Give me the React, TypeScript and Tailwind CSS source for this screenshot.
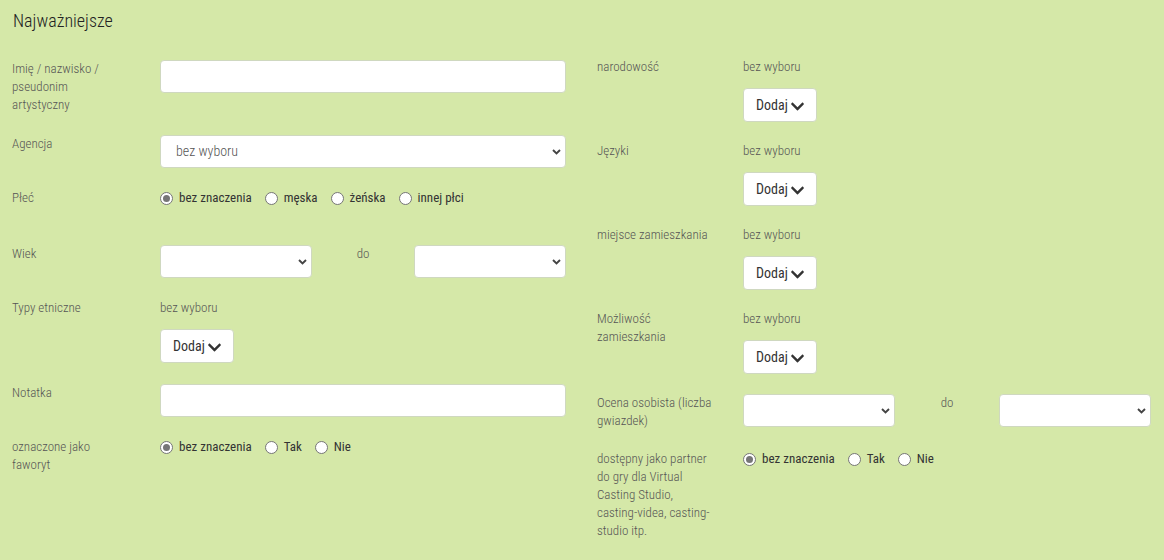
import { FaChevronDown } from "react-icons/fa";

function Label({ lines, w }: { lines: string[]; w: string }) {
  return (
    <div className={`${w} shrink-0 text-[13px] leading-[18px] font-light text-[#555] whitespace-nowrap`}>
      {lines.map((l, i) => (
        <div key={i}>{l}</div>
      ))}
    </div>
  );
}

function TextInput() {
  return <div className="flex-1 h-[33px] bg-white border border-[#cfd8c0] rounded-[4px]" />;
}

function Chevron() {
  return (
    <svg width="9" height="6" viewBox="0 0 9 6" className="shrink-0">
      <path d="M1 1 L4.5 4.5 L8 1" fill="none" stroke="#444" strokeWidth="1.9" />
    </svg>
  );
}

function Select({ text, w }: { text?: string; w: string }) {
  return (
    <div
      className={`${w} h-[33px] bg-white border border-[#cfd8c0] rounded-[4px] flex items-center justify-between pl-[15px] pr-[4px]`}
    >
      <span className="text-[14px] font-light text-[#555]">{text ?? ""}</span>
      <Chevron />
    </div>
  );
}

function Radio({ checked }: { checked?: boolean }) {
  return (
    <span className="w-[13px] h-[13px] rounded-full border border-[#767676] bg-white flex items-center justify-center shrink-0">
      {checked && <span className="w-[7px] h-[7px] rounded-full bg-[#767676]" />}
    </span>
  );
}

function Radios({ options }: { options: string[] }) {
  return (
    <div className="flex items-center gap-[13px] h-[18px] text-[13px] text-[#333]">
      {options.map((o, i) => (
        <label key={o} className="flex items-center gap-[6px]">
          <Radio checked={i === 0} />
          <span>{o}</span>
        </label>
      ))}
    </div>
  );
}

function Dodaj() {
  return (
    <div className="flex flex-col">
      <div className="h-[18px] text-[13px] leading-[18px] font-light text-[#555]">bez wyboru</div>
      <div className="mt-[12px] w-[74px] h-[34px] bg-white border border-[#cfd8c0] rounded-[4px] flex items-center pl-[12px] gap-[2px] text-[14px] text-[#333]">
        <span>Dodaj</span>
        <FaChevronDown className="text-[#333] w-[15px] h-[15px] mt-[2px]" />
      </div>
    </div>
  );
}

function Range() {
  return (
    <div className="flex-1 flex items-start">
      <Select w="w-[152px]" />
      <div className="flex-1 text-center text-[13px] leading-[18px] font-light text-[#555]">do</div>
      <Select w="w-[152px]" />
    </div>
  );
}

export default function App() {
  const L = "w-[148px]";
  const R = "w-[146px]";
  return (
    <div className="w-[1164px] h-[560px] bg-[#d5e8a8] font-['Roboto_Condensed',sans-serif] overflow-hidden">
      <div className="pl-[13px] pt-[7px] h-[58px] text-[18px] font-light text-[#222]">Najważniejsze</div>
      <div className="grid grid-cols-2 gap-[31px] pl-3 pr-[13px]">
        {/* left */}
        <div className="flex flex-col gap-[21px] pt-[2px]">
          <div className="flex items-start">
            <Label w={L} lines={["Imię / nazwisko /", "pseudonim", "artystyczny"]} />
            <TextInput />
          </div>
          <div className="flex items-start">
            <Label w={L} lines={["Agencja"]} />
            <Select w="flex-1" text="bez wyboru" />
          </div>
          <div className="flex items-start h-[35px]">
            <Label w={L} lines={["Płeć"]} />
            <Radios options={["bez znaczenia", "męska", "żeńska", "innej płci"]} />
          </div>
          <div className="flex items-start">
            <Label w={L} lines={["Wiek"]} />
            <Range />
          </div>
          <div className="flex items-start">
            <Label w={L} lines={["Typy etniczne"]} />
            <Dodaj />
          </div>
          <div className="flex items-start">
            <Label w={L} lines={["Notatka"]} />
            <TextInput />
          </div>
          <div className="flex items-start">
            <Label w={L} lines={["oznaczone jako", "faworyt"]} />
            <Radios options={["bez znaczenia", "Tak", "Nie"]} />
          </div>
        </div>
        {/* right */}
        <div className="flex flex-col gap-[20px]">
          <div className="flex items-start">
            <Label w={R} lines={["narodowość"]} />
            <Dodaj />
          </div>
          <div className="flex items-start">
            <Label w={R} lines={["Języki"]} />
            <Dodaj />
          </div>
          <div className="flex items-start">
            <Label w={R} lines={["miejsce zamieszkania"]} />
            <Dodaj />
          </div>
          <div className="flex items-start">
            <Label w={R} lines={["Możliwość", "zamieszkania"]} />
            <Dodaj />
          </div>
          <div className="flex items-start">
            <Label w={R} lines={["Ocena osobista (liczba", "gwiazdek)"]} />
            <Range />
          </div>
          <div className="flex items-start">
            <Label
              w={R}
              lines={["dostępny jako partner", "do gry dla Virtual", "Casting Studio,", "casting-videa, casting-", "studio itp."]}
            />
            <Radios options={["bez znaczenia", "Tak", "Nie"]} />
          </div>
        </div>
      </div>
    </div>
  );
}
